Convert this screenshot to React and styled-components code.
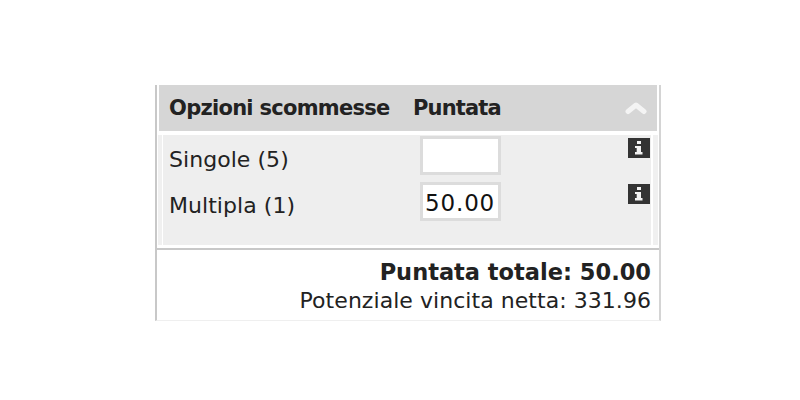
import React from "react";
import styled, { createGlobalStyle } from "styled-components";

const GlobalStyle = createGlobalStyle`
  html, body {
    margin: 0;
    background: #fff;
    font-family: "DejaVu Sans", Verdana, sans-serif;
  }
`;

const Page = styled.div`
  width: 800px;
  height: 400px;
  padding: 85px 0 0 155px;
  box-sizing: border-box;
  overflow: hidden;
`;

const Panel = styled.div`
  width: 506px;
  height: 236px;
  box-sizing: border-box;
  border-left: 2px solid #c8c8c8;
  border-right: 2px solid #d4d4d4;
  border-bottom: 1px solid #efefef;
  display: flex;
  flex-direction: column;
`;

const Header = styled.div`
  height: 46px;
  margin: 0 2px;
  background: #d6d6d6;
  display: flex;
  align-items: center;
  padding: 0 10px;
  color: #222;
  font-size: 21px;
  font-weight: 700;
  letter-spacing: -0.72px;
`;

const OptionsTitle = styled.span`
  width: 244px;
`;

const StakeTitle = styled.span`
  flex: 1;
  letter-spacing: -0.85px;
`;

const Strip = styled.div`
  height: 110px;
  margin: 4px 1px 0;
  padding-left: 4px;
  background: #f0f0f0;
`;

const Body = styled.div`
  height: 110px;
  width: 491px;
  box-sizing: border-box;
  background: #eeeeee;
  border-left: 1px solid #fff;
  border-right: 2px solid #fff;
  padding: 1px 0 0 6px;
  display: flex;
  flex-direction: column;
  gap: 7px;
`;

const Row = styled.div`
  display: grid;
  grid-template-columns: 251px 81px 1fr;
  height: 39px;
  color: #222;
  font-size: 22px;
  letter-spacing: 0.05px;
`;

const RowLabel = styled.span`
  line-height: 47px;
`;

const Stake = styled.input`
  width: 81px;
  height: 39px;
  box-sizing: border-box;
  border: 3px solid #dcdcdc;
  background: #fff;
  padding: 3px 2px 0;
  margin: 0;
  outline: 0;
  color: #111;
  font-family: inherit;
  font-size: 23px;
  letter-spacing: 0.85px;
`;

const Info = styled.span`
  justify-self: end;
  display: block;
  width: 22px;
  height: 20px;
  margin: 2px 1px 0 0;
`;

const Footer = styled.div`
  flex: 1;
  margin-top: 3px;
  border-top: 2px solid #c8c8c8;
  padding: 8px 8px 0 0;
  text-align: right;
  color: #222;
`;

const Total = styled.div`
  font-size: 22.5px;
  font-weight: 700;
  line-height: 28px;
`;

const Win = styled.div`
  font-size: 22px;
  line-height: 30px;
  letter-spacing: 0.05px;
`;

const Chevron = () => (
  <svg width="22" height="14" viewBox="0 0 22 14">
    <path d="M3 10.5 L11 4 L19 10.5" fill="none" stroke="#f4f4f4" strokeWidth="5" strokeLinecap="round" strokeLinejoin="round" />
  </svg>
);

const InfoIcon = () => (
  <Info>
    <svg width="22" height="20" viewBox="0 0 22 20">
      <rect width="22" height="20" fill="#333" />
      <rect x="9" y="3" width="4" height="3" fill="#f2f2f2" />
      <path d="M7 8 H13 V14 H14.5 V16.5 H7 V14 H8.7 V10 H7 Z" fill="#f2f2f2" />
    </svg>
  </Info>
);

export default function App() {
  return (
    <Page>
      <GlobalStyle />
      <Panel>
        <Header>
          <OptionsTitle>Opzioni scommesse</OptionsTitle>
          <StakeTitle>Puntata</StakeTitle>
          <Chevron />
        </Header>
        <Strip>
          <Body>
            <Row>
              <RowLabel>Singole (5)</RowLabel>
              <Stake type="text" defaultValue="" />
              <InfoIcon />
            </Row>
            <Row>
              <RowLabel>Multipla (1)</RowLabel>
              <Stake type="text" defaultValue="50.00" />
              <InfoIcon />
            </Row>
          </Body>
        </Strip>
        <Footer>
          <Total>Puntata totale: 50.00</Total>
          <Win>Potenziale vincita netta: 331.96</Win>
        </Footer>
      </Panel>
    </Page>
  );
}
